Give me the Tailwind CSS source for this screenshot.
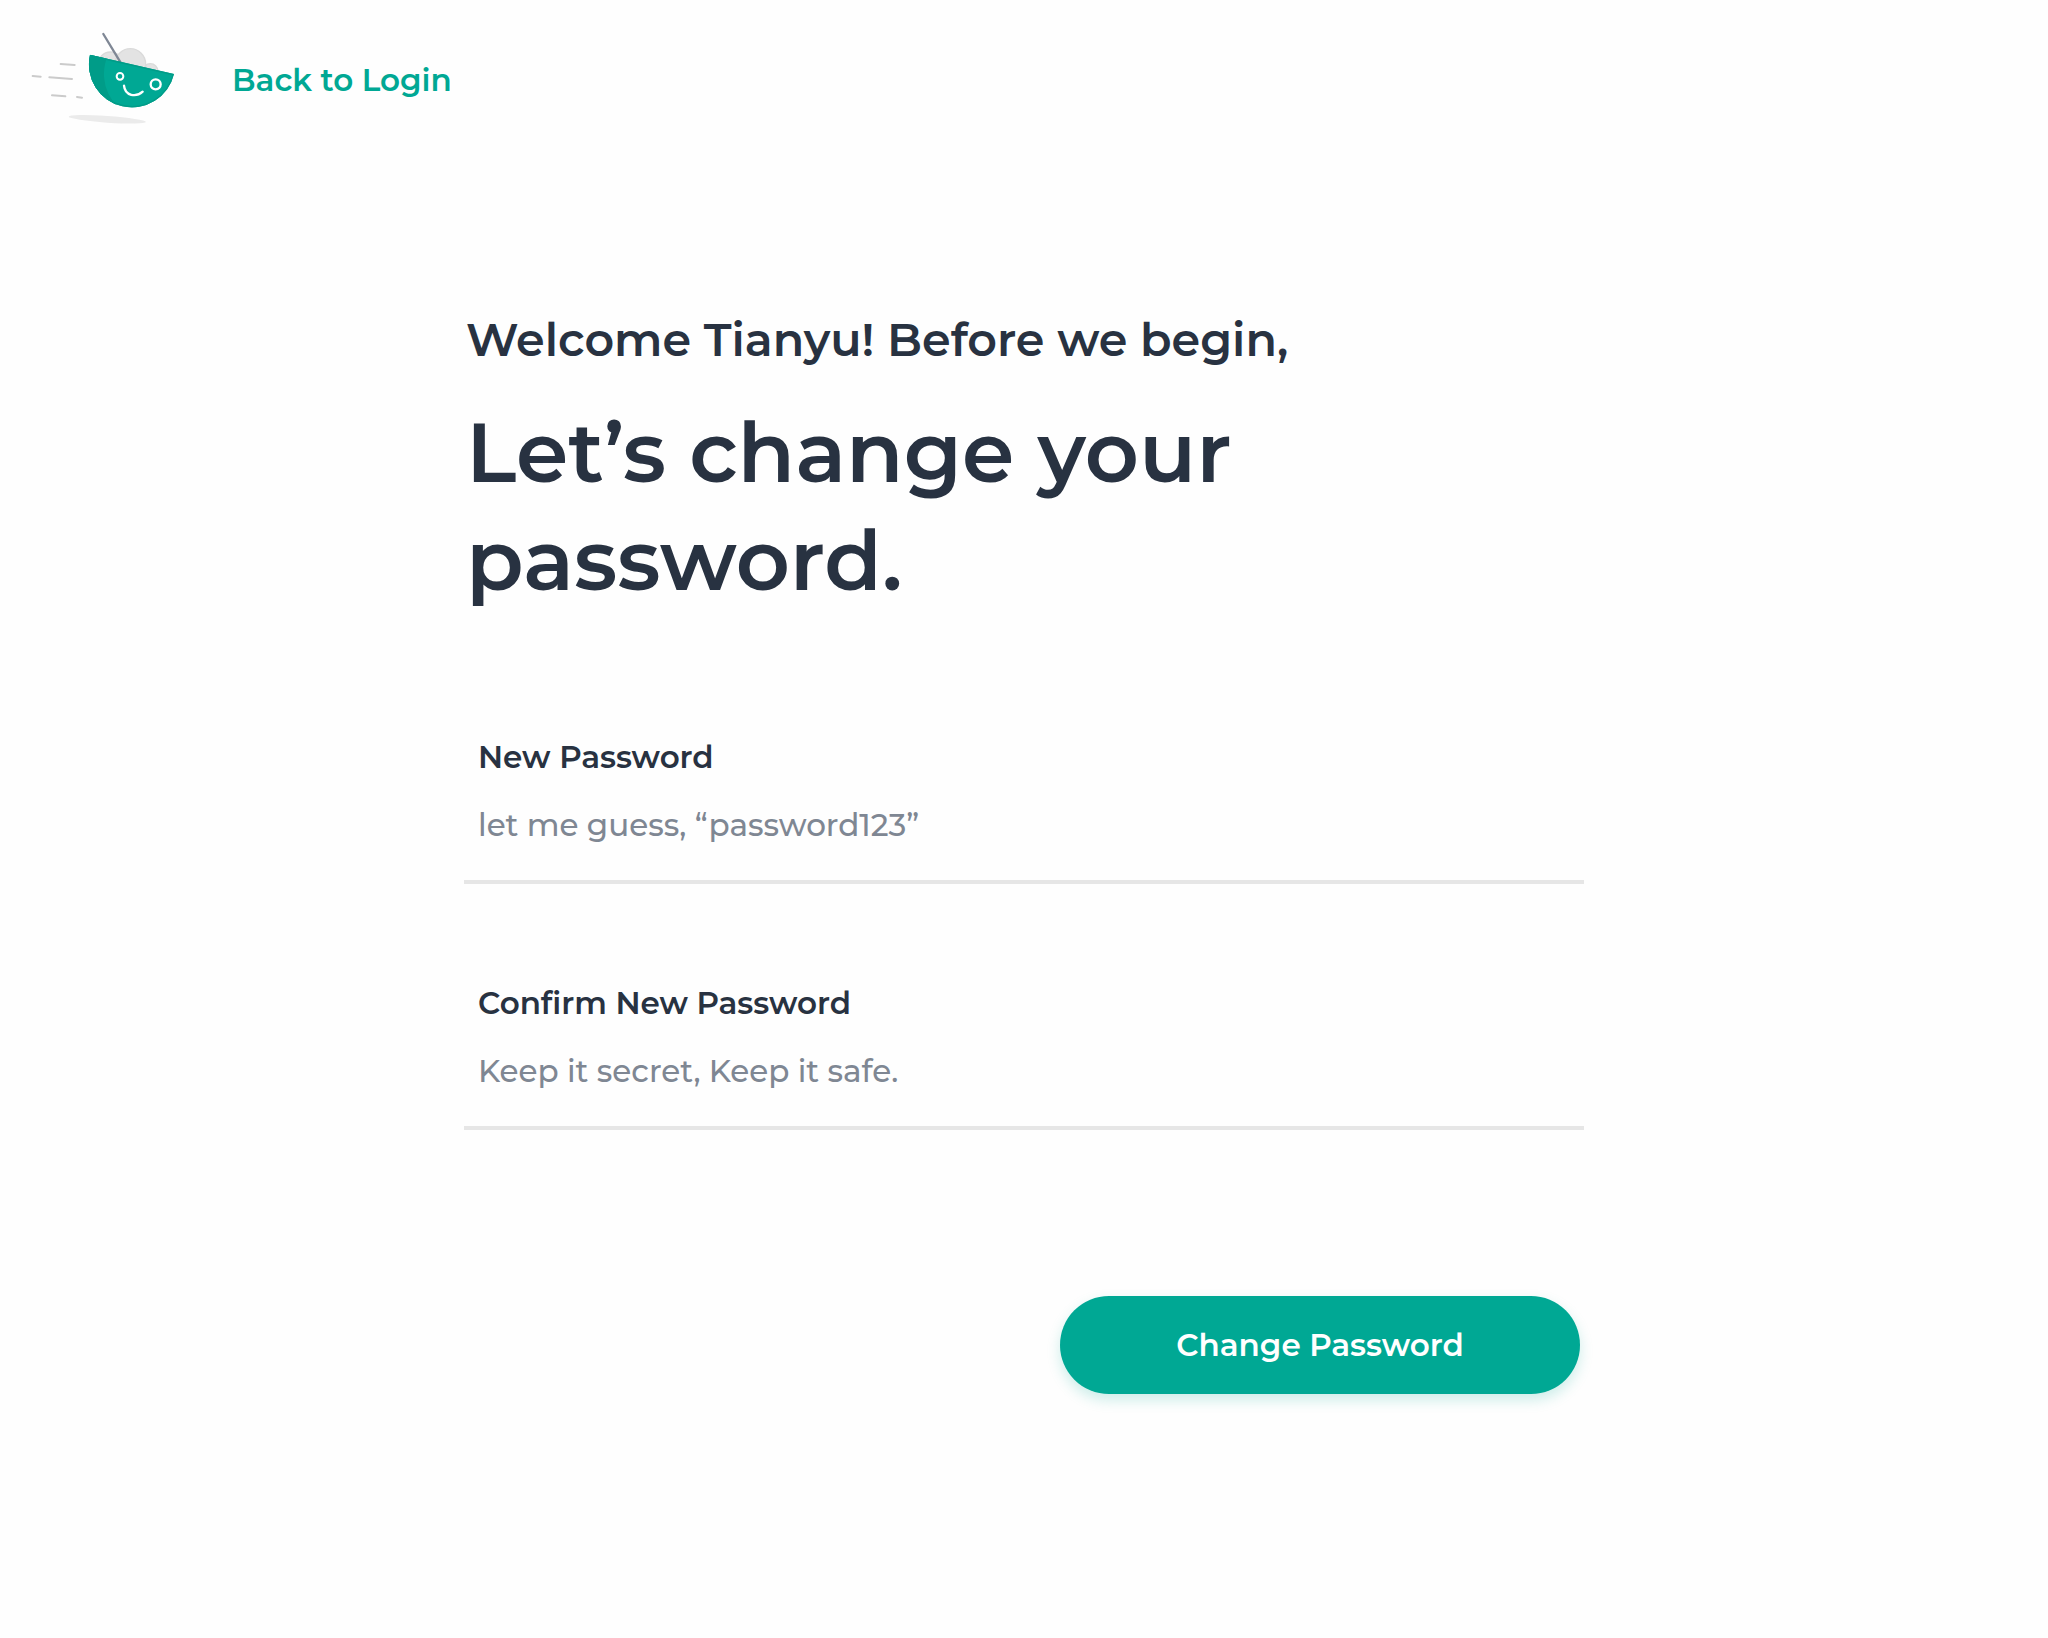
<!DOCTYPE html>
<html lang="en">
<head>
<meta charset="utf-8">
<meta name="viewport" content="width=device-width, initial-scale=1">
<title>Change password</title>
<script src="https://cdn.jsdelivr.net/npm/@tailwindcss/browser@4"></script>
</head>
<body class="min-h-screen bg-[#fefefe] font-['Montserrat','Inter',sans-serif] text-[#283241]">
<header class="flex items-center gap-[42px] p-5">
  <svg class="h-[120px] w-[170px] shrink-0" viewBox="0 0 510 360" fill="none" role="img" aria-label="Flying rice bowl">
    <ellipse cx="262" cy="298" rx="116" ry="10" transform="rotate(4 262 298)" fill="#ebebeb"/>
    <g stroke="#cbcbcb" stroke-width="6" stroke-linecap="round">
      <path d="M122 132l42 3M38 168l24 2M88 172l68 5M96 226l40 3M171 231l15 2"/>
    </g>
    <g fill="#e3e3e3" stroke="#dadada" stroke-width="4">
      <circle cx="271" cy="133" r="37"/>
      <circle cx="391" cy="154" r="23"/>
      <circle cx="331" cy="132" r="46"/>
    </g>
    <path d="M250 42l52 86" stroke="#7f8795" stroke-width="7" stroke-linecap="round"/>
    <clipPath id="bowl"><path d="M210 104L462 162A127 127 0 0 1 210 104Z"/></clipPath>
    <g clip-path="url(#bowl)">
      <path d="M200 90H470V270H200Z" fill="#00a894"/>
      <path d="M200 90H270Q250 130 252 170Q256 225 296 262H200Z" fill="#009c88"/>
      <path d="M210 104L462 162A127 127 0 0 1 210 104Z" stroke="#009c88" stroke-width="9"/>
    </g>
    <circle cx="300" cy="169" r="10" stroke="#fff" stroke-width="6"/>
    <circle cx="407" cy="193" r="15" stroke="#fff" stroke-width="7"/>
    <path d="M312 197C315 228 348 233 368 215" stroke="#fff" stroke-width="7" stroke-linecap="round"/>
  </svg>
  <a href="#login" class="text-[31px] leading-10 font-semibold text-[#00a894]">Back to Login</a>
</header>
<main class="mx-auto max-w-[1120px] pt-[152px] pb-16">
  <div class="px-0.5">
    <p class="text-[46px] leading-14 font-semibold">Welcome Tianyu! Before we begin,</p>
    <h1 class="mt-[30px] max-w-4xl text-[84px] leading-[108px] font-semibold">Let’s change your password.</h1>
  </div>
  <form class="mt-[123px] flex flex-col">
    <div class="flex flex-col gap-7 border-b-4 border-[#e6e6e6] px-[14px] pb-[35px]">
      <label for="new-password" class="text-[31px] leading-10 font-semibold">New Password</label>
      <input id="new-password" type="password" placeholder="let me guess, “password123”" class="h-10 w-full text-[31px] leading-10 font-medium outline-none placeholder:text-[#7f8793]">
    </div>
    <div class="mt-[99px] flex flex-col gap-7 border-b-4 border-[#e6e6e6] px-[14px] pb-[35px]">
      <label for="confirm-password" class="text-[31px] leading-10 font-semibold">Confirm New Password</label>
      <input id="confirm-password" type="password" placeholder="Keep it secret, Keep it safe." class="h-10 w-full text-[31px] leading-10 font-medium outline-none placeholder:text-[#7f8793]">
    </div>
    <button type="submit" class="mt-[166px] mr-1 h-[98px] w-[520px] self-end rounded-full bg-[#00a894] text-[31px] leading-10 font-semibold text-white shadow-[0_6px_14px_rgba(0,168,148,0.2)]">Change Password</button>
  </form>
</main>
</body>
</html>
